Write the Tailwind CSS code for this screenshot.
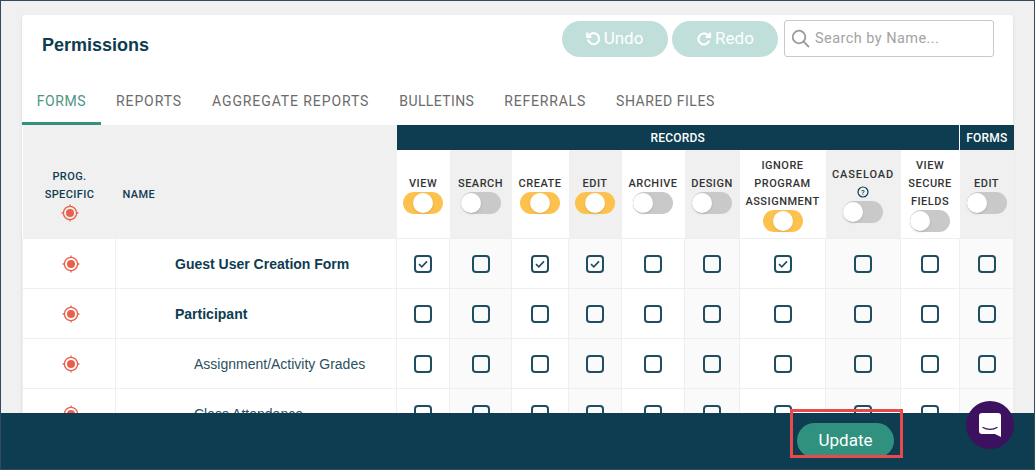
<!DOCTYPE html>
<html lang="en">
<head>
    <meta charset="UTF-8">
    <title>Permissions</title>
    <script src="https://cdn.jsdelivr.net/npm/@tailwindcss/browser@4"></script>
</head>
<body class="relative w-[1035px] h-[470px] overflow-hidden bg-[#f0f0f0] font-['Roboto',sans-serif]">

    <!-- Card -->
    <main class="absolute left-[22px] top-[15px] w-[991px] bg-white rounded-t shadow-sm">
        <!-- Header -->
        <div class="flex h-[62px] pl-5 pr-[19px]">
            <h1 class="mt-[20px] text-[18px] leading-5 font-bold text-[#0e3c50] font-['Liberation_Sans',sans-serif]">Permissions</h1>
            <div class="ml-auto mt-[6px] flex gap-1 h-9">
                <button class="w-[106px] h-9 pr-[2px] rounded-full bg-[#c0deda] text-white text-[17px] flex items-center justify-center gap-[3px]">
                    <svg class="w-4 h-4" viewBox="0 0 16 16" fill="none" stroke="white" stroke-width="2.2"><path d="M3.2 8.5A5.5 5.5 0 1 0 5 3.6L2.4 5.6"/><path d="M2.2 1.6v4.4h4.2"/></svg>
                    Undo
                </button>
                <button class="w-[106px] h-9 rounded-full bg-[#c0deda] text-white text-[17px] flex items-center justify-center gap-[3px]">
                    <svg class="w-4 h-4" viewBox="0 0 16 16" fill="none" stroke="white" stroke-width="2.2"><path d="M13.2 9.5A5.5 5.5 0 1 1 11.5 3.8L13.6 6"/><path d="M14 1.6V6H9.8"/></svg>
                    Redo
                </button>
                <div class="ml-[2px] w-[210px] h-[37px] -mt-[1px] border border-[#c8c8c8] rounded-[3px] flex items-center pl-[6px] gap-[5px]">
                    <svg class="w-[19px] h-[19px]" viewBox="0 0 19 19" fill="none" stroke="#9a9a9a" stroke-width="1.8"><circle cx="8" cy="8" r="6.3"/><path d="M12.6 12.6L18 18"/></svg>
                    <span class="text-[14.5px] text-[#a3a3a3] tracking-[0.45px]">Search by Name...</span>
                </div>
            </div>
        </div>

        <!-- Tabs -->
        <nav class="flex h-[48px] text-[14px] text-[#6b6b6b]">
            <a class="w-[79px] pt-[3px] tracking-[0.6px] flex items-center justify-center border-b-[3px] border-[#35907f] text-[#4d9485]">FORMS</a>
            <a class="ml-[15px] tracking-[0.9px] flex items-center">REPORTS</a>
            <a class="ml-[30px] tracking-[0.9px] flex items-center">AGGREGATE REPORTS</a>
            <a class="ml-[30px] tracking-[0.4px] flex items-center">BULLETINS</a>
            <a class="ml-[30px] tracking-[0.8px] flex items-center">REFERRALS</a>
            <a class="ml-[30px] tracking-[0.55px] flex items-center">SHARED FILES</a>
        </nav>

        <!-- Table -->
        <table class="table-fixed w-[991px] border-collapse">
            <colgroup>
                <col class="w-[93px]"><col class="w-[281px]"><col class="w-[53px]"><col class="w-[62px]"><col class="w-[57px]"><col class="w-[53px]">
                <col class="w-[63px]"><col class="w-[55px]"><col class="w-[86px]"><col class="w-[75px]"><col class="w-[59px]"><col class="w-[54px]">
            </colgroup>
            <thead>
                <tr class="h-[25px]">
                    <th colspan="2" rowspan="2" class="p-0 pt-[27px] bg-[#f0f0f0] align-middle">
                        <div class="flex items-center text-[11px] leading-[18px] font-medium text-[#0e3c50] tracking-[0.4px]">
                            <div class="w-[94px] flex flex-col items-center">
                                <span>PROG.</span><span>SPECIFIC</span>
                                <svg class="w-[18px] h-[18px]" viewBox="0 0 18 18" fill="none" stroke="#e8604c" stroke-width="1.3"><circle cx="9" cy="9" r="6.6"/><circle cx="9" cy="9" r="4" fill="#e8604c" stroke="none"/><path d="M9 .6v2M9 15.4v2M.6 9h2M15.4 9h2"/></svg>
                            </div>
                            <span class="ml-[6px]">NAME</span>
                        </div>
                    </th>
                    <th colspan="9" class="p-0 pt-px bg-[#0e3c50] text-white text-[12px] font-medium tracking-[0.2px]">RECORDS</th>
                    <th class="p-0 pt-px bg-[#0e3c50] text-white text-[12px] font-medium tracking-[0.2px] border-l border-white">FORMS</th>
                </tr>
                <tr class="h-[88px] text-[11px] leading-[18px] font-medium text-[#333] tracking-[0.5px] [&_div>span:not(.block)]:translate-y-px">
                    <th class="p-0 font-medium"><div class="flex flex-col items-center"><span>VIEW</span><span class="relative block w-10 h-[22px] rounded-full bg-[#fdc24e]"><span class="absolute left-[10px] top-px w-5 h-5 rounded-full bg-white shadow"></span></span></div></th>
                    <th class="p-0 font-medium bg-[#f0f0f0]"><div class="flex flex-col items-center"><span>SEARCH</span><span class="relative block w-10 h-[22px] rounded-full bg-[#c9c9c9]"><span class="absolute left-0 top-px w-5 h-5 rounded-full bg-white shadow"></span></span></div></th>
                    <th class="p-0 font-medium"><div class="flex flex-col items-center"><span>CREATE</span><span class="relative block w-10 h-[22px] rounded-full bg-[#fdc24e]"><span class="absolute left-[10px] top-px w-5 h-5 rounded-full bg-white shadow"></span></span></div></th>
                    <th class="p-0 font-medium bg-[#f0f0f0]"><div class="flex flex-col items-center"><span>EDIT</span><span class="relative block w-10 h-[22px] rounded-full bg-[#fdc24e]"><span class="absolute left-[10px] top-px w-5 h-5 rounded-full bg-white shadow"></span></span></div></th>
                    <th class="p-0 font-medium"><div class="flex flex-col items-center"><span>ARCHIVE</span><span class="relative block w-10 h-[22px] rounded-full bg-[#c9c9c9]"><span class="absolute left-0 top-px w-5 h-5 rounded-full bg-white shadow"></span></span></div></th>
                    <th class="p-0 font-medium bg-[#f0f0f0]"><div class="flex flex-col items-center"><span>DESIGN</span><span class="relative block w-10 h-[22px] rounded-full bg-[#c9c9c9]"><span class="absolute left-0 top-px w-5 h-5 rounded-full bg-white shadow"></span></span></div></th>
                    <th class="p-0 font-medium"><div class="flex flex-col items-center"><span>IGNORE</span><span>PROGRAM</span><span>ASSIGNMENT</span><span class="relative block w-10 h-[22px] rounded-full bg-[#fdc24e]"><span class="absolute left-[10px] top-px w-5 h-5 rounded-full bg-white shadow"></span></span></div></th>
                    <th class="p-0 font-medium bg-[#f0f0f0]"><div class="flex flex-col items-center"><span class="tracking-[0.9px]">CASELOAD</span>
                        <svg class="w-[18px] h-[18px]" viewBox="0 0 18 18" fill="none" stroke="#0e3c50" stroke-width="1.2"><circle cx="9" cy="9" r="5"/><text x="9" y="11.7" text-anchor="middle" font-size="7.5" fill="#0e3c50" stroke="none">?</text></svg>
                        <span class="relative block w-10 h-[22px] rounded-full bg-[#c9c9c9]"><span class="absolute left-0 top-px w-5 h-5 rounded-full bg-white shadow"></span></span></div></th>
                    <th class="p-0 font-medium"><div class="flex flex-col items-center"><span>VIEW</span><span>SECURE</span><span>FIELDS</span><span class="relative block w-10 h-[22px] rounded-full bg-[#c9c9c9]"><span class="absolute left-0 top-px w-5 h-5 rounded-full bg-white shadow"></span></span></div></th>
                    <th class="p-0 font-medium bg-[#f0f0f0]"><div class="flex flex-col items-center"><span>EDIT</span><span class="relative block w-10 h-[22px] rounded-full bg-[#c9c9c9]"><span class="absolute left-0 top-px w-5 h-5 rounded-full bg-white shadow"></span></span></div></th>
                </tr>
            </thead>
            <tbody id="rows"></tbody>
        </table>
    </main>

    <!-- Footer bar -->
    <footer class="absolute left-0 right-0 top-[413px] h-[57px] bg-[#0e3c50]">
        <button class="absolute left-[797px] top-[10px] w-[97px] h-[35px] pt-px rounded-full bg-[#2f917e] text-white text-[17px]">Update</button>
        <div class="absolute left-[790px] -top-[4px] w-[113px] h-[49px] border-[3px] border-[#e8494a]"></div>
    </footer>

    <!-- Chat bubble -->
    <div class="absolute left-[966px] top-[401px] w-12 h-12 rounded-full bg-[#3c1160] flex items-center justify-center">
        <svg class="w-[22px] h-6" viewBox="0 0 22 24"><path d="M3 0h16a3 3 0 0 1 3 3v21l-6-3H3a3 3 0 0 1-3-3V3a3 3 0 0 1 3-3z" fill="white"/><path d="M4 14.5c4 2.5 10 2.5 14 0" fill="none" stroke="#3c1160" stroke-width="1.4" stroke-linecap="round"/></svg>
    </div>

    <!-- Frame -->
    <div class="absolute inset-0 border border-[#34495e] pointer-events-none"></div>

    <script>
        // name, indent class, which columns are ticked
        const rows = [
            { name: 'Guest User Creation Form', cls: 'pl-[59px] pt-[2px] font-bold text-[#0e3c50] text-[14px]', ticked: [0, 2, 3, 6] },
            { name: 'Participant', cls: 'pl-[59px] pt-[2px] font-bold text-[#0e3c50] text-[14px]', ticked: [] },
            { name: 'Assignment/Activity Grades', cls: 'pl-[78px] pt-[2px] text-[#2c4f5f] text-[14px]', ticked: [] },
            { name: 'Class Attendance', cls: 'pl-[78px] pt-[2px] text-[#2c4f5f] text-[14px]', ticked: [] },
        ];
        const target = '<svg class="w-[18px] h-[18px] mt-px mx-auto block translate-x-[2px]" viewBox="0 0 18 18" fill="none" stroke="#e8604c" stroke-width="1.3"><circle cx="9" cy="9" r="6.6"/><circle cx="9" cy="9" r="4" fill="#e8604c" stroke="none"/><path d="M9 .6v2M9 15.4v2M.6 9h2M15.4 9h2"/></svg>';
        const tick = '<svg class="w-[18px] h-[18px] mt-px mx-auto block" viewBox="0 0 18 18" fill="none"><rect x="1" y="1" width="16" height="16" rx="3" stroke="#1f4e60" stroke-width="2"/><path d="M5 9.2l2.8 2.6L13 6.4" stroke="#1f4e60" stroke-width="1.6"/></svg>';
        const box = '<svg class="w-[18px] h-[18px] mt-px mx-auto block" viewBox="0 0 18 18" fill="none"><rect x="1" y="1" width="16" height="16" rx="3" stroke="#1f4e60" stroke-width="2"/></svg>';

        document.getElementById('rows').innerHTML = rows.map(function (r) {
            let cells = '';
            for (let i = 0; i < 10; i++) {
                const shade = i % 2 === 1 ? 'bg-[#fafafa]' : '';
                cells += '<td class="p-0 border border-[#efefef] ' + shade + '">' + (r.ticked.includes(i) ? tick : box) + '</td>';
            }
            return '<tr class="h-[50px]"><td class="p-0 border border-[#efefef]">' + target + '</td>'
                + '<td class="p-0 border border-[#efefef] font-[\'Liberation_Sans\',sans-serif] ' + r.cls + '">' + r.name + '</td>' + cells + '</tr>';
        }).join('');
    </script>
</body>
</html>
